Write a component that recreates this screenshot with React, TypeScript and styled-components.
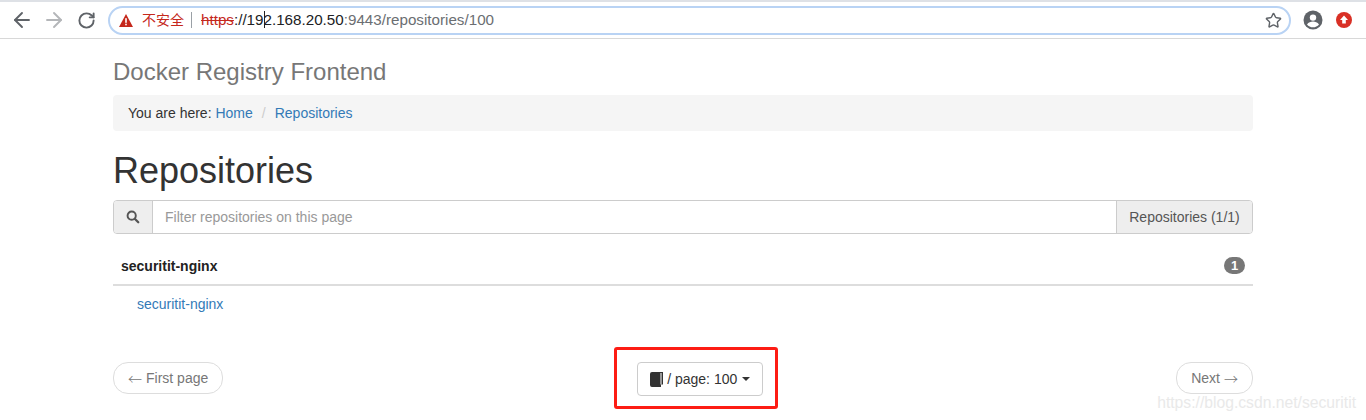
import styled, { createGlobalStyle } from "styled-components";
import { ArrowLeft, ArrowRight, RotateCw, Star } from "lucide-react";

const GlobalStyle = createGlobalStyle`
  html, body {
    margin: 0;
    padding: 0;
    background: #fff;
    font-family: "Liberation Sans", Arial, sans-serif;
    font-size: 14px;
    color: #333;
  }
  * {
    box-sizing: border-box;
  }
`;

const Page = styled.div`
  position: relative;
  width: 1366px;
  height: 420px;
  overflow: hidden;
`;

const Toolbar = styled.header`
  height: 39px;
  display: flex;
  align-items: center;
  padding: 0 12px 0 6px;
  border-top: 2px solid #dee1e6;
  border-bottom: 1px solid #d8d8d8;
  background: #fff;
`;

const NavButton = styled.span<{ $dim?: boolean }>`
  width: 32px;
  display: flex;
  justify-content: center;
  color: ${(p) => (p.$dim ? "#b4b6b9" : "#5f6368")};
`;

const Omnibox = styled.div`
  margin-left: 6px;
  flex: 0 0 1183px;
  height: 29px;
  display: flex;
  align-items: center;
  padding: 0 7px 0 9px;
  border: 2px solid #b9d3f4;
  border-radius: 15px;
  font-size: 15.2px;
  color: #6b6e72;
`;

const Warning = styled.span`
  display: inline-flex;
  align-items: center;
  gap: 9px;
  color: #c5281c;
  font-family: "Liberation Sans", "Noto Sans CJK SC", sans-serif;
  font-size: 14px;
  padding-right: 7px;
  border-right: 1px solid #9aa0a6;
  height: 16px;
  line-height: 16px;
`;

const Scheme = styled.span`
  margin-left: 9px;
  color: #c5281c;
  text-decoration: line-through;
`;

const Host = styled.span`
  color: #202124;
`;

const Caret = styled.span`
  display: inline-block;
  width: 1px;
  height: 17px;
  margin: 0 -1px 0 0;
  background: #202124;
  vertical-align: -3px;
`;

const Url = styled.span`
  flex: 1;
  margin-top: -1px;
  white-space: nowrap;
`;

const Profile = styled.div`
  display: flex;
  align-items: center;
  gap: 13px;
  margin-left: 12px;
`;

const Container = styled.main`
  width: 1140px;
  margin-left: 113px;
`;

const Brand = styled.div`
  padding-top: 20px;
  height: 56px;
  font-size: 24px;
  line-height: 26px;
  color: #777;
`;

const Breadcrumb = styled.nav`
  height: 36px;
  display: flex;
  align-items: center;
  padding: 0 15px;
  background: #f5f5f5;
  border-radius: 4px;
`;

const Crumb = styled.a`
  color: #337ab7;
  text-decoration: none;
`;

const Sep = styled.span`
  padding: 0 9px;
  color: #ccc;
`;

const Title = styled.h1`
  margin: 20px 0 9px;
  font-size: 36px;
  font-weight: 500;
  line-height: 40px;
  color: #333;
`;

const InputGroup = styled.div`
  display: flex;
  height: 34px;
  border: 1px solid #ccc;
  border-radius: 4px;
`;

const Addon = styled.span<{ $end?: boolean }>`
  display: flex;
  align-items: center;
  justify-content: center;
  background: #eee;
  color: #555;
  padding: 0 12px;
  width: ${(p) => (p.$end ? "136px" : "39px")};
  border-${(p) => (p.$end ? "left" : "right")}: 1px solid #ccc;
  border-radius: ${(p) => (p.$end ? "0 3px 3px 0" : "3px 0 0 3px")};
`;

const Filter = styled.div`
  flex: 1;
  display: flex;
  align-items: center;
  padding: 0 12px;
  color: #999;
`;

const GroupRow = styled.div`
  margin-top: 17px;
  height: 35px;
  display: flex;
  align-items: center;
  justify-content: space-between;
  padding: 0 8px 4px;
  border-bottom: 2px solid #ddd;
`;

const GroupName = styled.strong`
  font-size: 14px;
  color: #222;
`;

const Badge = styled.span`
  min-width: 21px;
  height: 17px;
  margin-top: -1px;
  border-radius: 9px;
  background: #777;
  color: #fff;
  font-size: 13px;
  font-weight: 700;
  line-height: 17px;
  text-align: center;
`;

const RepoRow = styled.div`
  padding: 8px 24px 0;
  height: 50px;
  line-height: 20px;
`;

const Pager = styled.div`
  margin-top: 26px;
  display: flex;
  align-items: flex-start;
  justify-content: space-between;
`;

const PageLink = styled.a`
  height: 32px;
  display: inline-flex;
  align-items: center;
  gap: 4px;
  padding: 0 14px;
  border: 1px solid #ddd;
  border-radius: 15px;
  color: #777;
  background: #fff;
`;

const Arrow = styled.span`
  width: 14px;
  font-family: "Noto Sans CJK SC", sans-serif;
  font-size: 14px;
  font-weight: 300;
  text-align: center;
`;

const PageSize = styled.button`
  position: relative;
  width: 126px;
  height: 34px;
  display: flex;
  align-items: center;
  justify-content: center;
  gap: 4px;
  padding: 0;
  background: #fff;
  border: 1px solid #ccc;
  border-radius: 4px;
  color: #333;
  font: inherit;
`;

const DropCaret = styled.span`
  width: 0;
  height: 0;
  margin-left: 1px;
  border-top: 4px solid #333;
  border-left: 4px solid transparent;
  border-right: 4px solid transparent;
`;

const Highlight = styled.span`
  position: absolute;
  left: -24px;
  top: -16px;
  width: 164px;
  height: 62px;
  border: 3px solid #fd1c14;
  border-radius: 3px;
  pointer-events: none;
`;

const Watermark = styled.span`
  position: absolute;
  right: 10px;
  bottom: 8px;
  font-size: 15.7px;
  color: #e9e9e9;
  pointer-events: none;
`;

export default function App() {
  return (
    <Page>
      <GlobalStyle />
      <Toolbar>
        <NavButton>
          <ArrowLeft size={24} strokeWidth={1.9} />
        </NavButton>
        <NavButton $dim>
          <ArrowRight size={24} strokeWidth={1.9} />
        </NavButton>
        <NavButton>
          <RotateCw size={19} strokeWidth={2.4} />
        </NavButton>
        <Omnibox>
          <Warning>
            <svg width="14" height="13" viewBox="0 0 14 13">
              <path d="M7 0 14 13H0Z" fill="#c5281c" />
              <rect x="6.2" y="4.2" width="1.6" height="4.6" fill="#fff" />
              <rect x="6.2" y="9.7" width="1.6" height="1.6" fill="#fff" />
            </svg>
            不安全
          </Warning>
          <Url>
            <Scheme>https</Scheme>
            <Host>
              ://19
              <Caret />
              2.168.20.50
            </Host>
            :9443/repositories/100
          </Url>
          <Star size={17} color="#5f6368" strokeWidth={2} />
        </Omnibox>
        <Profile>
          <svg width="20" height="20" viewBox="0 0 20 20">
            <circle cx="10" cy="10" r="9.5" fill="#5f6368" />
            <circle cx="10" cy="7.6" r="3.2" fill="#fff" />
            <path d="M4 14.4c1.4-2.2 3.8-3 6-3s4.600.8 6 3c-1.500 1.900-3.700 2.800-6 2.800s-4.500-.9-6-2.800Z" fill="#fff" />
          </svg>
          <svg width="16" height="16" viewBox="0 0 16 16">
            <circle cx="8" cy="8" r="8" fill="#d93025" />
            <path d="M8 3.500 12 8H9.800v3.500H6.200V8H4Z" fill="#fff" />
          </svg>
        </Profile>
      </Toolbar>
      <Container>
        <Brand>Docker Registry Frontend</Brand>
        <Breadcrumb>
          You are here:&nbsp;<Crumb>Home</Crumb>
          <Sep>/</Sep>
          <Crumb>Repositories</Crumb>
        </Breadcrumb>
        <Title>Repositories</Title>
        <InputGroup>
          <Addon>
            <svg width="16" height="16" viewBox="0 0 16 16">
              <circle cx="6.500" cy="6.500" r="4.700" fill="none" stroke="#555" strokeWidth="2.200" />
              <path d="M10 10 14 14" stroke="#555" strokeWidth="2.600" strokeLinecap="round" />
            </svg>
          </Addon>
          <Filter>Filter repositories on this page</Filter>
          <Addon $end>Repositories (1/1)</Addon>
        </InputGroup>
        <GroupRow>
          <GroupName>securitit-nginx</GroupName>
          <Badge>1</Badge>
        </GroupRow>
        <RepoRow>
          <Crumb>securitit-nginx</Crumb>
        </RepoRow>
        <Pager>
          <PageLink>
            <Arrow>←</Arrow>
            First page
          </PageLink>
          <PageSize>
            <svg width="14" height="15" viewBox="0 0 14 15">
              <path d="M3 0h11v12.500H12V15H3a2 2 0 0 1-2-2V2a2 2 0 0 1 2-2Z" fill="#333" />
              <path d="M12 1v11.500" stroke="#fff" strokeWidth="1" />
            </svg>
            / page: 100
            <DropCaret />
            <Highlight />
          </PageSize>
          <PageLink>
            Next
            <Arrow>→</Arrow>
          </PageLink>
        </Pager>
      </Container>
      <Watermark>https://blog.csdn.net/securitit</Watermark>
    </Page>
  );
}
